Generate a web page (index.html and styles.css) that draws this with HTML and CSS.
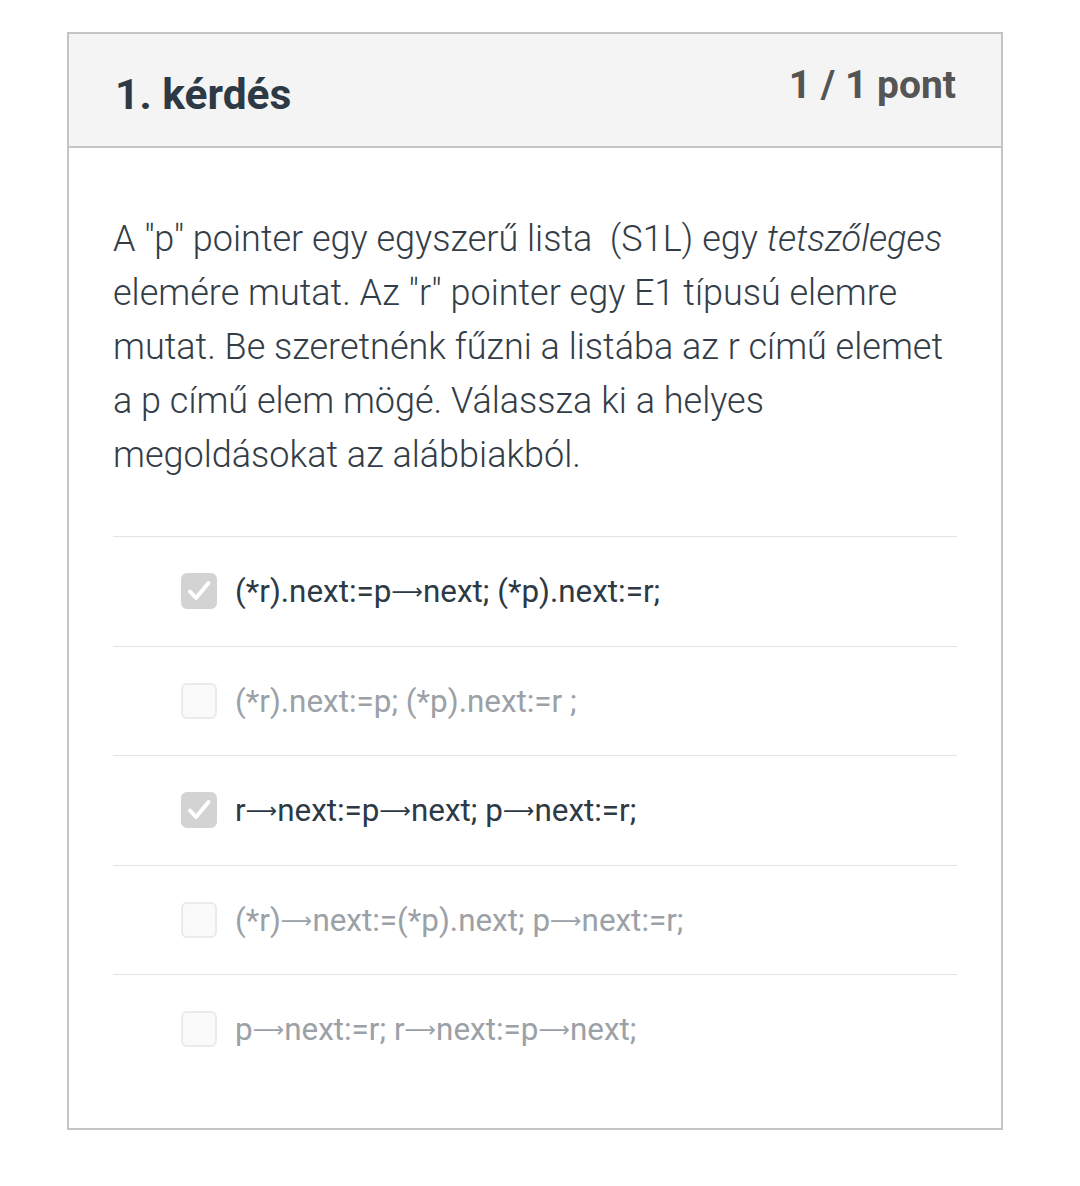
FILE: index.html
```html
<!DOCTYPE html>
<html lang="hu">
<head>
<meta charset="utf-8">
<link rel="stylesheet" href="styles.css">
</head>
<body>
<div class="card">
  <div class="card-header">
    <h2 class="title">1. kérdés</h2>
    <div class="points">1 / 1 pont</div>
  </div>
  <div class="card-body">
    <p class="question">A "p" pointer egy egyszerű lista &nbsp;(S1L) egy <em>tetszőleges</em> elemére mutat. Az "r" pointer egy E1 típusú elemre mutat. Be szeretnénk fűzni a listába az r című elemet a p című elem mögé. Válassza ki a helyes megoldásokat az alábbiakból.</p>
    <ul class="options">
      <li class="option selected">
        <span class="box checked"><svg viewBox="0 0 36 36" width="36" height="36"><path d="M9 18.5l6 6.5L27.5 10" fill="none" stroke="#fff" stroke-width="4" stroke-linecap="round" stroke-linejoin="round"/></svg></span>
        <span class="label">(*r).next:=p<span class="arr">⟶</span>next; (*p).next:=r;</span>
      </li>
      <li class="option">
        <span class="box"></span>
        <span class="label">(*r).next:=p; (*p).next:=r ;</span>
      </li>
      <li class="option selected">
        <span class="box checked"><svg viewBox="0 0 36 36" width="36" height="36"><path d="M9 18.5l6 6.5L27.5 10" fill="none" stroke="#fff" stroke-width="4" stroke-linecap="round" stroke-linejoin="round"/></svg></span>
        <span class="label">r<span class="arr">⟶</span>next:=p<span class="arr">⟶</span>next; p<span class="arr">⟶</span>next:=r;</span>
      </li>
      <li class="option">
        <span class="box"></span>
        <span class="label">(*r)<span class="arr">⟶</span>next:=(*p).next; p<span class="arr">⟶</span>next:=r;</span>
      </li>
      <li class="option">
        <span class="box"></span>
        <span class="label">p<span class="arr">⟶</span>next:=r; r<span class="arr">⟶</span>next:=p<span class="arr">⟶</span>next;</span>
      </li>
    </ul>
  </div>
</div>
</body>
</html>
```

FILE: styles.css
```css
* { box-sizing: border-box; }
body {
  margin: 0;
  background: #fff;
  font-family: Roboto, "Liberation Sans", sans-serif;
}
.card {
  margin: 32px 0 0 67px;
  width: 936px;
  border: 2px solid #c4c4c4;
  background: #fff;
}
.card-header {
  height: 114px;
  background: #f4f4f4;
  border-bottom: 2px solid #c4c4c4;
  display: flex;
  justify-content: space-between;
  align-items: flex-start;
  padding: 0 45px 0 46px;
}
.title {
  margin: 36px 0 0 0;
  font-size: 42.5px;
  font-weight: 700;
  color: #2d3a45;
  line-height: 50px;
}
.points {
  margin-top: 28px;
  font-size: 39px;
  font-weight: 700;
  color: #555;
  line-height: 46px;
}
.card-body {
  padding: 64px 44px 44px 44px;
}
.question {
  margin: 0;
  font-size: 36px;
  font-weight: 300;
  line-height: 54px;
  color: #333d47;
}
.question em { font-style: italic; }
.options {
  list-style: none;
  margin: 54px 0 0 0;
  padding: 0;
}
.option {
  height: 109.5px;
  border-top: 1.5px solid #e3e3e3;
  display: flex;
  align-items: center;
  padding: 2px 0 0 68px;
  gap: 18px;
  font-size: 31.4px;
  line-height: 40px;
  color: #9ba1a6;
}
.option.selected { color: #2d3a45; }
.arr {
  font-family: "DejaVu Sans", sans-serif;
  font-size: 22px;
  line-height: 1;
  vertical-align: 3px;
}
.box {
  width: 36px;
  height: 36px;
  border-radius: 6px;
  border: 2px solid #ebebeb;
  background: #fafafa;
  flex: none;
  display: flex;
  margin-top: -2px;
}
.box.checked {
  background: #d3d3d3;
  border-color: #d3d3d3;
}
.box svg { margin: -2px; }
```
